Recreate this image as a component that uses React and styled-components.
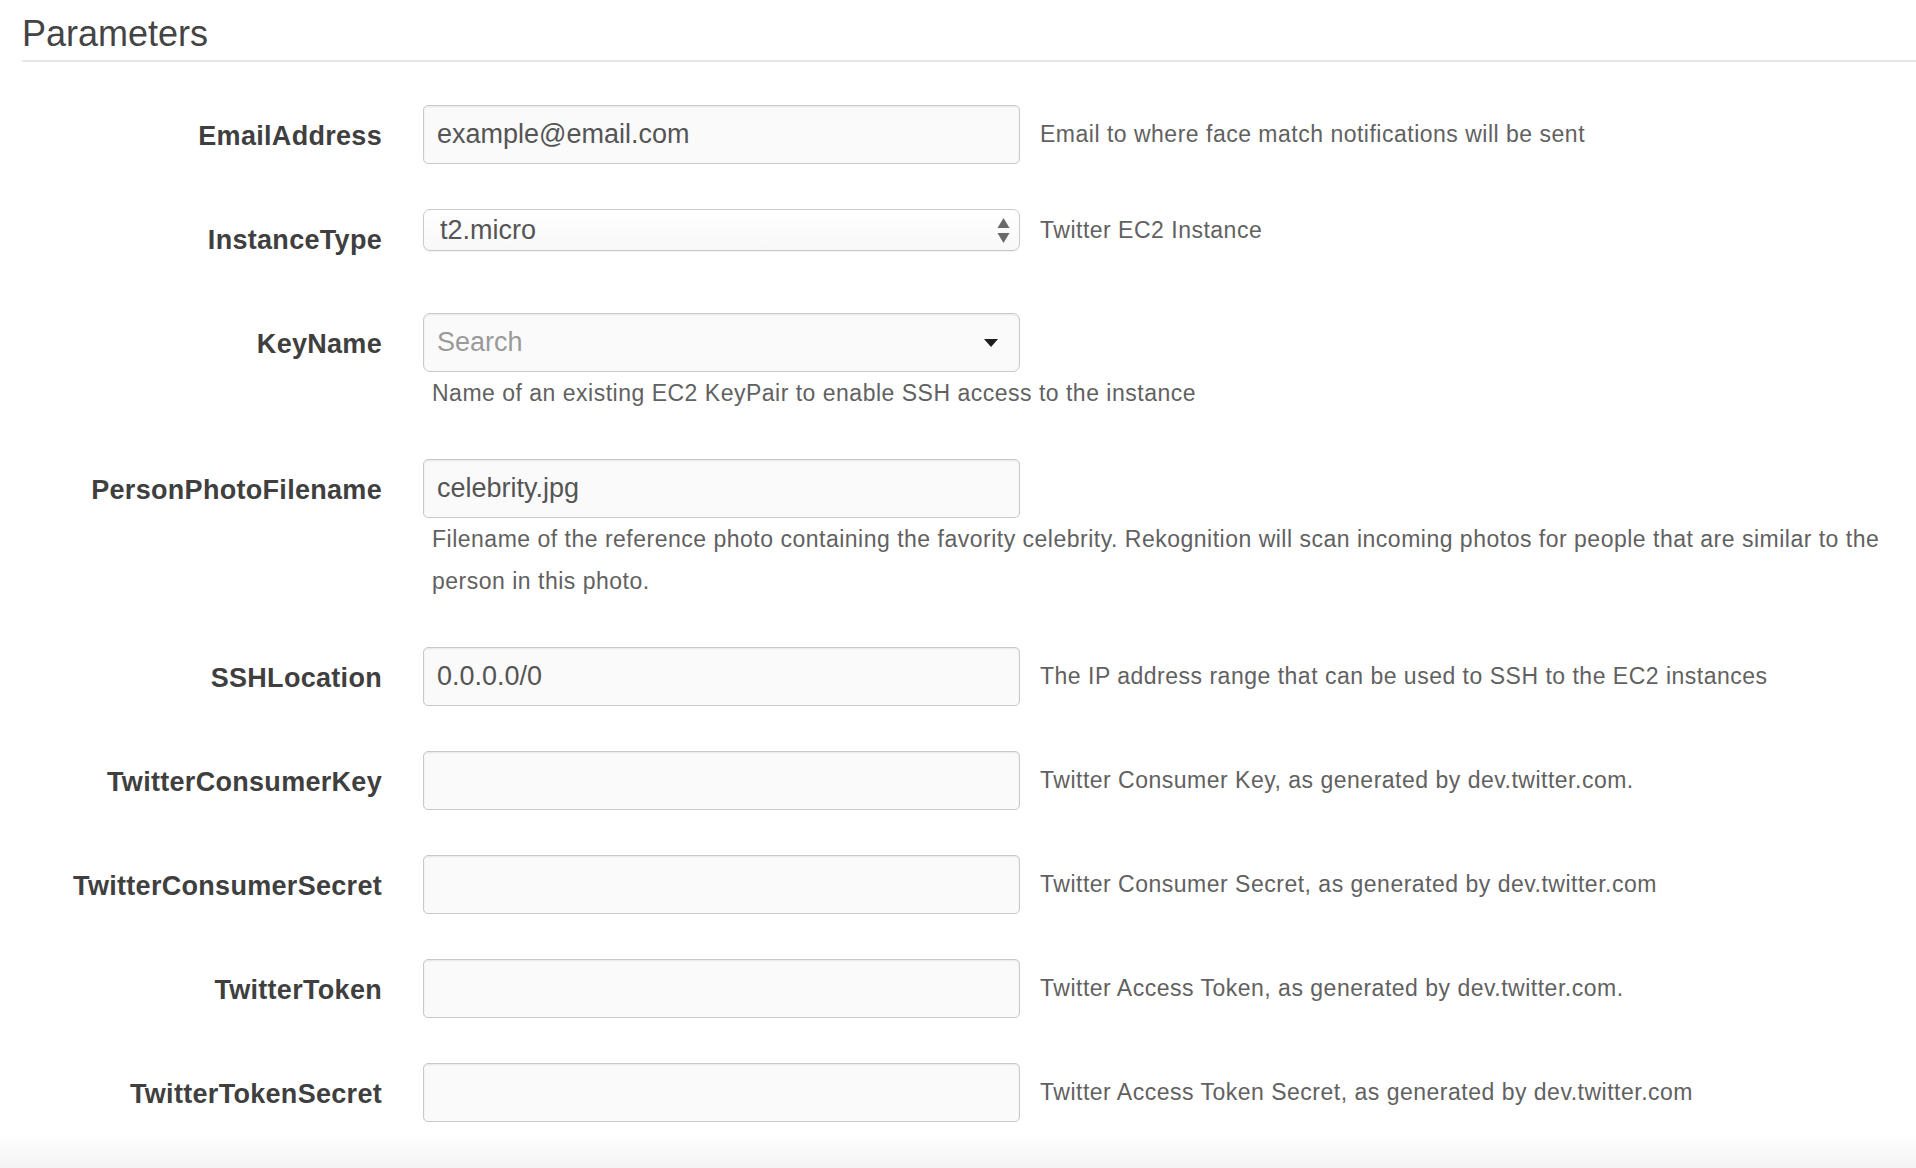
import React from "react";
import styled, { createGlobalStyle } from "styled-components";

const GlobalStyle = createGlobalStyle`
  html, body { margin: 0; padding: 0; background: #ffffff; }
  body { font-family: "Liberation Sans", Arial, Helvetica, sans-serif; }
  * { box-sizing: border-box; }
`;

const Page = styled.div`
  padding: 0 20px 0 22px;
  overflow: hidden;
`;

const Title = styled.h2`
  margin: 0 -20px 0 0;
  padding: 14px 0 6px 0;
  font-size: 36px;
  line-height: 40px;
  font-weight: 400;
  color: #444;
  border-bottom: 2px solid #e6e6e6;
`;

const Form = styled.div`
  display: flex;
  flex-direction: column;
  gap: 45px;
  margin-top: 43px;
`;

const Row = styled.div`
  display: flex;
  align-items: flex-start;
  min-height: 59px;
`;

const Label = styled.label`
  flex: none;
  width: 360px;
  margin-right: 41px;
  padding-top: 14px;
  text-align: right;
  font-size: 27px;
  line-height: 34px;
  font-weight: 700;
  letter-spacing: 0.3px;
  color: #3f3f3f;
  white-space: nowrap;
`;

const Field = styled.div`
  flex: 1;
  min-width: 0;
  display: flex;
  flex-direction: column;
`;

const ControlLine = styled.div`
  display: flex;
  align-items: center;
`;

const controlBase = `
  width: 597px;
  flex: none;
  border: 1px solid #c9c9c9;
  background: #fafafa;
  color: #555;
  font-family: "Liberation Sans", Arial, sans-serif;
  font-size: 27px;
`;

const TextInput = styled.input`
  ${controlBase}
  height: 59px;
  border-radius: 5px;
  padding: 0 13px;
  box-shadow: inset 0 1px 2px rgba(0, 0, 0, 0.08);
  outline: none;
  &::placeholder { color: #9a9a9a; }
`;

const SelectBox = styled.div`
  ${controlBase}
  height: ${(p) => (p.$tall ? "59px" : "42px")};
  border-radius: 7px;
  padding: 0 ${(p) => (p.$tall ? "21px" : "9px")} 0 ${(p) => (p.$tall ? "0" : "16px")};
  display: flex;
  align-items: center;
  justify-content: space-between;
  background: ${(p) => (p.$tall ? "#fafafa" : "linear-gradient(#ffffff, #f8f8f8)")};
  box-shadow: ${(p) => (p.$tall ? "inset 0 1px 2px rgba(0,0,0,0.08)" : "0 1px 1px rgba(0,0,0,0.06)")};
`;

const SelectValue = styled.span`
  line-height: 1;
  padding-top: 1px;
`;

const SearchInput = styled.input`
  flex: 1;
  min-width: 0;
  height: 100%;
  border: none;
  background: transparent;
  outline: none;
  padding: 0 13px;
  font-family: "Liberation Sans", Arial, sans-serif;
  font-size: 27px;
  color: #555;
  &::placeholder { color: #9a9a9a; }
`;

const Description = styled.span`
  margin-left: 20px;
  font-size: 23px;
  letter-spacing: 0.5px;
  color: #616161;
  white-space: nowrap;
`;

const HelpText = styled.div`
  padding-left: 9px;
  font-size: 23px;
  line-height: 42px;
  letter-spacing: 0.5px;
  color: #616161;
`;

const Footer = styled.div`
  height: 36px;
  margin: 10px -20px 0 -22px;
  background: linear-gradient(#ffffff, #f4f4f4);
`;

const UpDownArrows = () => (
  <svg width="13" height="25" viewBox="0 0 13 25" aria-hidden="true">
    <path d="M6.5 0 L12.5 10 L0.5 10 Z" fill="#6a6a6a" />
    <path d="M0.5 15 L12.5 15 L6.5 25 Z" fill="#6a6a6a" />
  </svg>
);

const Caret = () => (
  <svg width="14" height="8" viewBox="0 0 14 8" aria-hidden="true">
    <path d="M0 0 L14 0 L7 8 Z" fill="#1e1e1e" />
  </svg>
);

const params = [
  { name: "EmailAddress", kind: "input", value: "example@email.com", desc: "Email to where face match notifications will be sent" },
  { name: "InstanceType", kind: "select", value: "t2.micro", desc: "Twitter EC2 Instance" },
  { name: "KeyName", kind: "search", help: "Name of an existing EC2 KeyPair to enable SSH access to the instance" },
  {
    name: "PersonPhotoFilename",
    kind: "input",
    value: "celebrity.jpg",
    help: "Filename of the reference photo containing the favority celebrity. Rekognition will scan incoming photos for people that are similar to the person in this photo.",
  },
  { name: "SSHLocation", kind: "input", value: "0.0.0.0/0", desc: "The IP address range that can be used to SSH to the EC2 instances" },
  { name: "TwitterConsumerKey", kind: "input", value: "", desc: "Twitter Consumer Key, as generated by dev.twitter.com." },
  { name: "TwitterConsumerSecret", kind: "input", value: "", desc: "Twitter Consumer Secret, as generated by dev.twitter.com" },
  { name: "TwitterToken", kind: "input", value: "", desc: "Twitter Access Token, as generated by dev.twitter.com." },
  { name: "TwitterTokenSecret", kind: "input", value: "", desc: "Twitter Access Token Secret, as generated by dev.twitter.com" },
];

function Control({ p }) {
  if (p.kind === "select") {
    return (
      <SelectBox role="combobox">
        <SelectValue>{p.value}</SelectValue>
        <UpDownArrows />
      </SelectBox>
    );
  }
  if (p.kind === "search") {
    return (
      <SelectBox $tall role="combobox">
        <SearchInput placeholder="Search" readOnly />
        <Caret />
      </SelectBox>
    );
  }
  return <TextInput defaultValue={p.value} readOnly />;
}

export default function App() {
  return (
    <>
      <GlobalStyle />
      <Page>
        <Title>Parameters</Title>
        <Form>
          {params.map((p) => (
            <Row key={p.name}>
              <Label>{p.name}</Label>
              <Field>
                <ControlLine>
                  <Control p={p} />
                  {p.desc && <Description>{p.desc}</Description>}
                </ControlLine>
                {p.help && <HelpText>{p.help}</HelpText>}
              </Field>
            </Row>
          ))}
        </Form>
        <Footer />
      </Page>
    </>
  );
}
